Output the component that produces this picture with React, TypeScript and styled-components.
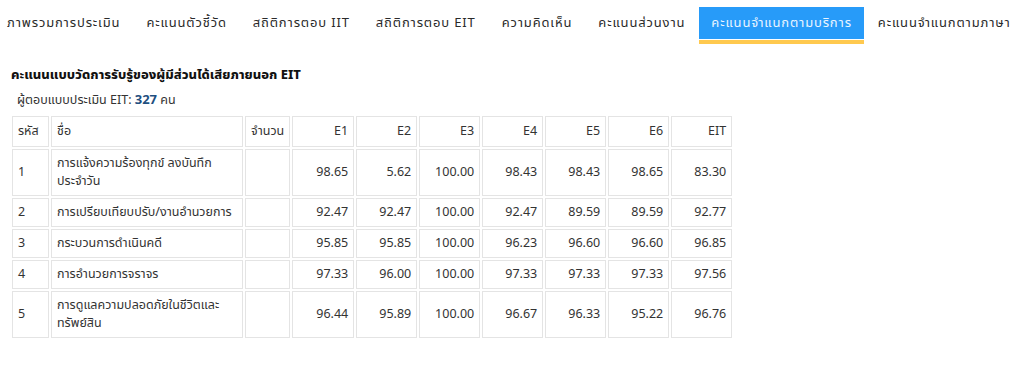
import React from "react";
import styled, { createGlobalStyle } from "styled-components";

const Global = createGlobalStyle`
  html, body { margin: 0; padding: 0; background: #fff; }
  body { font-family: "Noto Sans Thai", "Noto Sans", "Liberation Sans", sans-serif; color: #333; }
`;

const Page = styled.div`
  padding: 7px 0 0 0;
  width: 1024px;
  overflow: hidden;
`;

const Nav = styled.nav`
  display: flex;
  align-items: flex-start;
  margin-left: -5px;
  white-space: nowrap;
`;

const TabWrap = styled.div<{ $active?: boolean }>`
  display: flex;
  flex-direction: column;
  border-bottom: 4px solid ${(p) => (p.$active ? "#ffc94f" : "transparent")};
  margin-right: 2px;
`;

const Tab = styled.div<{ $active?: boolean }>`
  height: 32px;
  line-height: 32px;
  padding: 0 12px;
  font-size: 13px;
  letter-spacing: 0.85px;
  color: ${(p) => (p.$active ? "#eaf5ff" : "#2a2a2a")};
  background: ${(p) => (p.$active ? "#279bf9" : "transparent")};
  margin-bottom: 1px;
`;

const Section = styled.section`
  padding: 21px 0 0 10px;
`;

const Title = styled.h3`
  margin: 0 0 0 1px;
  font-size: 13px;
  font-weight: 800;
  line-height: 20px;
  color: #111;
`;

const Sub = styled.div`
  margin: 6px 0 0 7px;
  font-size: 12.5px;
  line-height: 18px;
  color: #333;
  b { font-weight: 700; color: #1e4f80; font-size: 13px; }
`;

const Table = styled.table`
  border-collapse: separate;
  border-spacing: 2px;
  margin-top: 4px;
  font-size: 12.5px;
  color: #333;
  table-layout: fixed;
`;

const Th = styled.th<{ $right?: boolean; $w: number }>`
  width: ${(p) => p.$w}px;
  box-sizing: border-box;
  border: 1px solid #e4e4e4;
  padding: 5.5px 5px;
  line-height: 18px;
  font-weight: 400;
  text-align: ${(p) => (p.$right ? "right" : "left")};
  vertical-align: middle;
`;

const Td = styled.td<{ $right?: boolean }>`
  border: 1px solid #e4e4e4;
  padding: 4.5px 5px;
  line-height: 18px;
  text-align: ${(p) => (p.$right ? "right" : "left")};
  vertical-align: middle;
`;

const tabs = [
  "ภาพรวมการประเมิน",
  "คะแนนตัวชี้วัด",
  "สถิติการตอบ IIT",
  "สถิติการตอบ EIT",
  "ความคิดเห็น",
  "คะแนนส่วนงาน",
  "คะแนนจำแนกตามบริการ",
  "คะแนนจำแนกตามภาษา",
];

const cols: { label: string; w: number; right?: boolean }[] = [
  { label: "รหัส", w: 37 },
  { label: "ชื่อ", w: 192 },
  { label: "จำนวน", w: 44 },
  { label: "E1", w: 62, right: true },
  { label: "E2", w: 61, right: true },
  { label: "E3", w: 61, right: true },
  { label: "E4", w: 61, right: true },
  { label: "E5", w: 61, right: true },
  { label: "E6", w: 61, right: true },
  { label: "EIT", w: 61, right: true },
];

const rows = [
  ["1", "การแจ้งความร้องทุกข์ ลงบันทึกประจำวัน", "98.65", "5.62", "100.00", "98.43", "98.43", "98.65", "83.30"],
  ["2", "การเปรียบเทียบปรับ/งานอำนวยการ", "92.47", "92.47", "100.00", "92.47", "89.59", "89.59", "92.77"],
  ["3", "กระบวนการดำเนินคดี", "95.85", "95.85", "100.00", "96.23", "96.60", "96.60", "96.85"],
  ["4", "การอำนวยการจราจร", "97.33", "96.00", "100.00", "97.33", "97.33", "97.33", "97.56"],
  ["5", "การดูแลความปลอดภัยในชีวิตและทรัพย์สิน", "96.44", "95.89", "100.00", "96.67", "96.33", "95.22", "96.76"],
];

export default function App() {
  return (
    <Page>
      <Global />
      <Nav>
        {tabs.map((t, i) => (
          <TabWrap key={t} $active={i === 6}>
            <Tab $active={i === 6}>{t}</Tab>
          </TabWrap>
        ))}
      </Nav>
      <Section>
        <Title>คะแนนแบบวัดการรับรู้ของผู้มีส่วนได้เสียภายนอก EIT</Title>
        <Sub>
          ผู้ตอบแบบประเมิน EIT: <b>327</b> คน
        </Sub>
        <Table>
          <thead>
            <tr>
              {cols.map((c) => (
                <Th key={c.label} $w={c.w} $right={c.right}>
                  {c.label}
                </Th>
              ))}
            </tr>
          </thead>
          <tbody>
            {rows.map((r) => (
              <tr key={r[0]}>
                <Td>{r[0]}</Td>
                <Td>{r[1]}</Td>
                <Td></Td>
                {r.slice(2).map((v, j) => (
                  <Td key={j} $right>
                    {v}
                  </Td>
                ))}
              </tr>
            ))}
          </tbody>
        </Table>
      </Section>
    </Page>
  );
}
